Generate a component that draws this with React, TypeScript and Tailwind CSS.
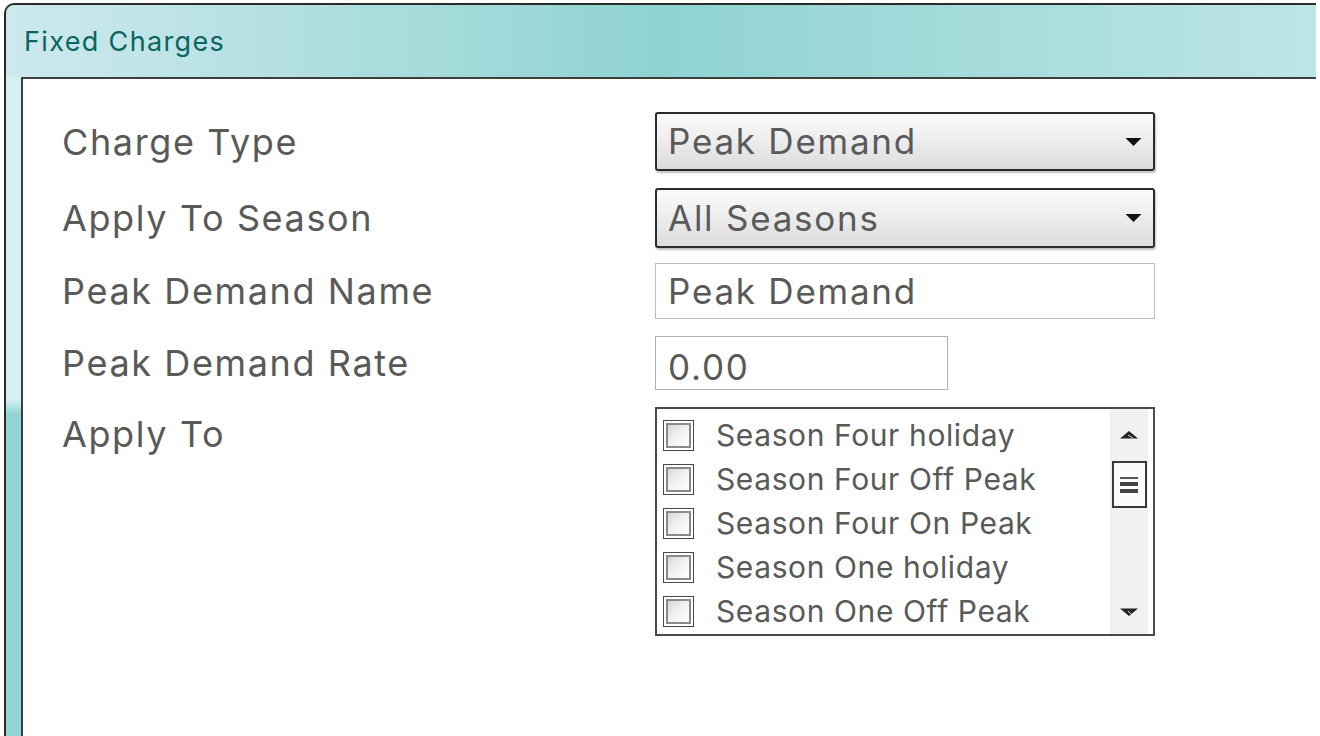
import React from 'react';

const seasons = [
  'Season Four holiday',
  'Season Four Off Peak',
  'Season Four On Peak',
  'Season One holiday',
  'Season One Off Peak',
];

function Arrow() {
  return (
    <svg width="17" height="10" viewBox="0 0 17 10" className="shrink-0">
      <path d="M0.5 1 L16.5 1 L8.5 9 Z" fill="#111" />
    </svg>
  );
}

function Select({ value }: { value: string }) {
  return (
    <div className="flex h-full w-[500px] items-center justify-between rounded-[3px] border-2 border-[#2b2b2b] bg-gradient-to-b from-[#fbfbfb] via-[#ececec] to-[#dcdcdc] pl-[11px] pr-[11px] shadow-[1px_2px_2px_rgba(0,0,0,0.25)]">
      <span className="text-[35px] leading-none tracking-[0.05em] text-[#5a5a5a]">{value}</span>
      <Arrow />
    </div>
  );
}

function Checkbox() {
  return (
    <div className="flex h-[31px] w-[31px] shrink-0 items-center justify-center border border-[#4a4a4a] bg-white">
      <div className="h-[25px] w-[25px] border-2 border-[#8a8a8a] bg-gradient-to-br from-[#d8d8d8] via-[#f2f2f2] to-[#fdfdfd]" />
    </div>
  );
}

function Scrollbar() {
  return (
    <div className="flex h-full w-[38px] flex-col items-center justify-between bg-[#f1f1f1] pb-[16px] pt-[20px]">
      <div className="flex flex-col items-center gap-[22px]">
        <svg width="20" height="10" viewBox="0 0 20 10">
          <path d="M1 9.5 L10 2 L19 9.5 Z" fill="#222" />
          <path d="M9 6 L14 9" stroke="#ddd" strokeWidth="1" />
        </svg>
        <div className="flex h-[47px] w-[35px] flex-col items-center justify-center gap-[3px] border-2 border-[#3a3a3a] bg-[#fbfbfb]">
          <div className="h-[2px] w-[18px] bg-[#555]" />
          <div className="h-[4px] w-[18px] bg-[#444]" />
          <div className="h-[4px] w-[18px] bg-[#444]" />
        </div>
      </div>
      <svg width="20" height="10" viewBox="0 0 20 10">
        <path d="M1 0.5 L19 0.5 L10 8 Z" fill="#222" />
        <path d="M9 3 L12 6" stroke="#ddd" strokeWidth="1" />
      </svg>
    </div>
  );
}

export default function App() {
  return (
    <div
      className="h-[736px] w-[1320px] overflow-hidden bg-white"
      style={{ fontFamily: 'Inter, "Noto Sans", sans-serif' }}
    >
      <div className="ml-[4px] mt-[3px] flex h-[733px] w-[1312px] flex-col rounded-tl-[10px] border-l-2 border-t-2 border-[#2a2a2a] bg-gradient-to-r from-[#cde9ed] via-[#8fd3d2] to-[#bde5e6]">
        <div className="flex h-[72px] items-center pl-[18px]">
          <h1 className="text-[27px] leading-none tracking-[0.05em] text-[#0b6461]">Fixed Charges</h1>
        </div>
        <div className="flex flex-1">
          <div className="w-[15px] bg-gradient-to-b from-[#d6eff1] from-[49%] to-[#93d5d4] to-[51%]" />
          <div className="flex-1 border-l-2 border-t-2 border-[#3e3e3e] bg-white pl-[39px] pt-[33px] text-[#595959]">
            <div className="flex flex-col">
              <div className="flex h-[59px] items-center">
                <div className="w-[593px] text-[36px] leading-none tracking-[0.045em]">Charge Type</div>
                <Select value="Peak Demand" />
              </div>
              <div className="mt-[17px] flex h-[60px] items-center">
                <div className="w-[593px] text-[36px] leading-none tracking-[0.045em]">Apply To Season</div>
                <Select value="All Seasons" />
              </div>
              <div className="mt-[15px] flex h-[56px] items-center">
                <div className="w-[593px] text-[36px] leading-none tracking-[0.045em]">Peak Demand Name</div>
                <div className="flex h-full w-[500px] items-center border border-[#bdbdbd] pl-[12px] text-[35px] leading-none tracking-[0.05em]">
                  Peak Demand
                </div>
              </div>
              <div className="mt-[17px] flex h-[54px] items-center">
                <div className="w-[593px] text-[36px] leading-none tracking-[0.045em]">Peak Demand Rate</div>
                <div className="flex h-full w-[293px] items-end border border-[#b0b0b0] pb-[4px] pl-[12px] text-[35px] leading-none tracking-[0.05em]">
                  0.00
                </div>
              </div>
              <div className="mt-[17px] flex items-start">
                <div className="w-[593px] pt-[9px] text-[36px] leading-none tracking-[0.045em]">Apply To</div>
                <div className="flex h-[229px] w-[500px] border-2 border-[#4a4a4a] bg-white pl-[6px]">
                  <div className="flex flex-1 flex-col pt-[4px]">
                    {seasons.map(s => (
                      <div key={s} className="flex h-[44px] items-center gap-[22px]">
                        <Checkbox />
                        <span className="text-[30px] leading-none tracking-[0.02em]">{s}</span>
                      </div>
                    ))}
                  </div>
                  <Scrollbar />
                  <div className="w-[5px]" />
                </div>
              </div>
            </div>
          </div>
        </div>
      </div>
    </div>
  );
}
